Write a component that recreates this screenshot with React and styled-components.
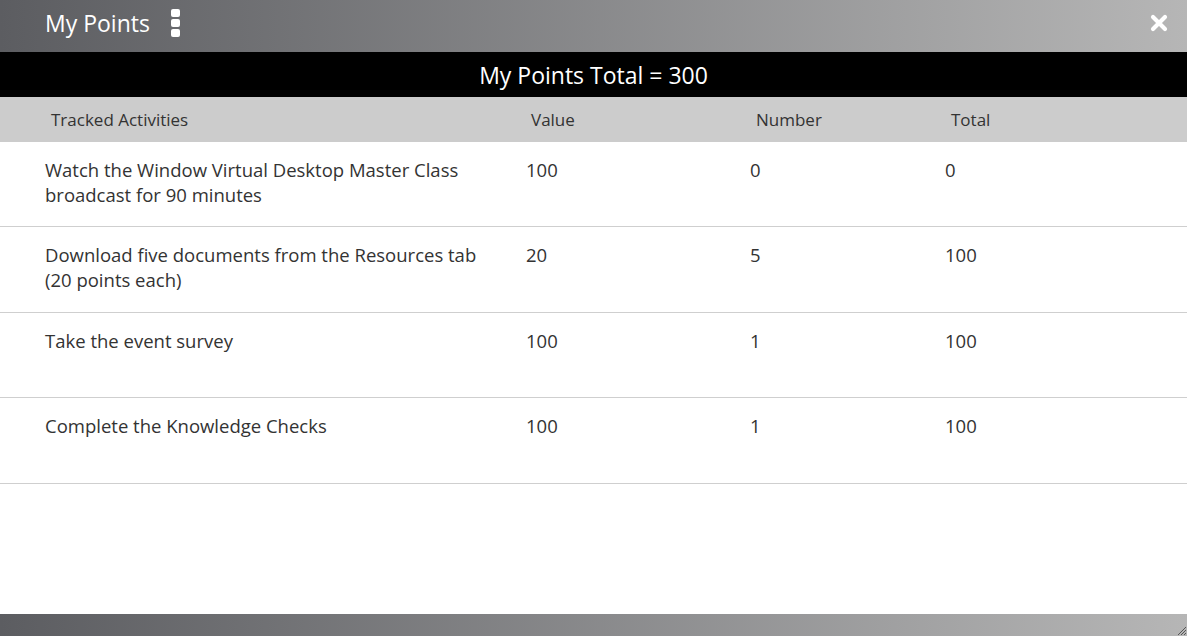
import React from 'react'
import styled, { createGlobalStyle } from 'styled-components'

const Global = createGlobalStyle`
  html, body {
    margin: 0;
    padding: 0;
    height: 100%;
  }
  body {
    font-family: "Open Sans", "Noto Sans", sans-serif;
    color: #333;
  }
`

const Ventana = styled.div`
  height: 636px;
  display: flex;
  flex-direction: column;
  background: #fff;
`

const BarraTitulo = styled.div`
  height: 52px;
  flex: none;
  box-sizing: border-box;
  display: flex;
  align-items: center;
  padding: 0 19px 6px 45px;
  background: linear-gradient(to right, #5c5d61, #b6b6b6);
  color: #fff;
`

const Titulo = styled.h1`
  margin: 0;
  font-size: 23px;
  font-weight: 400;
`

const Kebab = styled.div`
  display: flex;
  flex-direction: column;
  gap: 2px;
  margin-left: 21px;
  span {
    width: 9px;
    height: 8px;
    border-radius: 2px;
    background: #fff;
  }
`

const Cerrar = styled.button`
  margin-left: auto;
  background: none;
  border: 0;
  padding: 0;
  display: flex;
  cursor: pointer;
`

const BarraTotal = styled.div`
  height: 45px;
  flex: none;
  background: #000;
  color: #fff;
  display: flex;
  align-items: center;
  justify-content: center;
  font-size: 23px;
`

const Fila = styled.div`
  display: grid;
  grid-template-columns: ${p => p.$cabecera ? '480px 225px 195px 1fr' : '481px 224px 195px 1fr'};
  padding-left: ${p => p.$cabecera ? '51px' : '45px'};
  background: ${p => p.$cabecera ? '#cccccc' : '#fff'};
  height: ${p => p.$cabecera ? '45px' : '85.4px'};
  box-sizing: border-box;
  align-items: ${p => p.$cabecera ? 'center' : 'start'};
  border-bottom: ${p => p.$cabecera ? '0' : '1px solid #cfcfcf'};
  font-size: ${p => p.$cabecera ? '17px' : '18.5px'};
  line-height: 25px;
  padding-top: ${p => p.$cabecera ? '0' : '15px'};
  flex: none;
`

const Celda = styled.div`
  padding-right: 22px;
`

const Relleno = styled.div`
  flex: 1;
`

const Pie = styled.div`
  height: 22px;
  flex: none;
  background: linear-gradient(to right, #5c5d61, #b6b6b6);
  display: flex;
  justify-content: flex-end;
  align-items: flex-end;
`

const filas = [
  ['Watch the Window Virtual Desktop Master Class broadcast for 90 minutes', 100, 0, 0],
  ['Download five documents from the Resources tab (20 points each)', 20, 5, 100],
  ['Take the event survey', 100, 1, 100],
  ['Complete the Knowledge Checks', 100, 1, 100],
]

function App() {
  return (
    <>
      <Global />
      <Ventana>
        <BarraTitulo>
          <Titulo>My Points</Titulo>
          <Kebab><span /><span /><span /></Kebab>
          <Cerrar aria-label="Cerrar">
            <svg width="18" height="18" viewBox="0 0 18 18">
              <path d="M3 3 L15 15 M15 3 L3 15" stroke="#fff" strokeWidth="4.2" strokeLinecap="round" />
            </svg>
          </Cerrar>
        </BarraTitulo>
        <BarraTotal>My Points Total = 300</BarraTotal>
        <Fila $cabecera>
          <Celda>Tracked Activities</Celda>
          <Celda>Value</Celda>
          <Celda>Number</Celda>
          <Celda>Total</Celda>
        </Fila>
        {filas.map((f, i) => (
          <Fila key={i}>
            {f.map((c, j) => <Celda key={j}>{c}</Celda>)}
          </Fila>
        ))}
        <Relleno />
        <Pie>
          <svg width="12" height="12" viewBox="0 0 12 12">
            <path d="M11 3 L3 11 M11 6 L6 11 M11 9 L9 11" stroke="#555" strokeWidth="1" />
          </svg>
        </Pie>
      </Ventana>
    </>
  )
}

export default App
